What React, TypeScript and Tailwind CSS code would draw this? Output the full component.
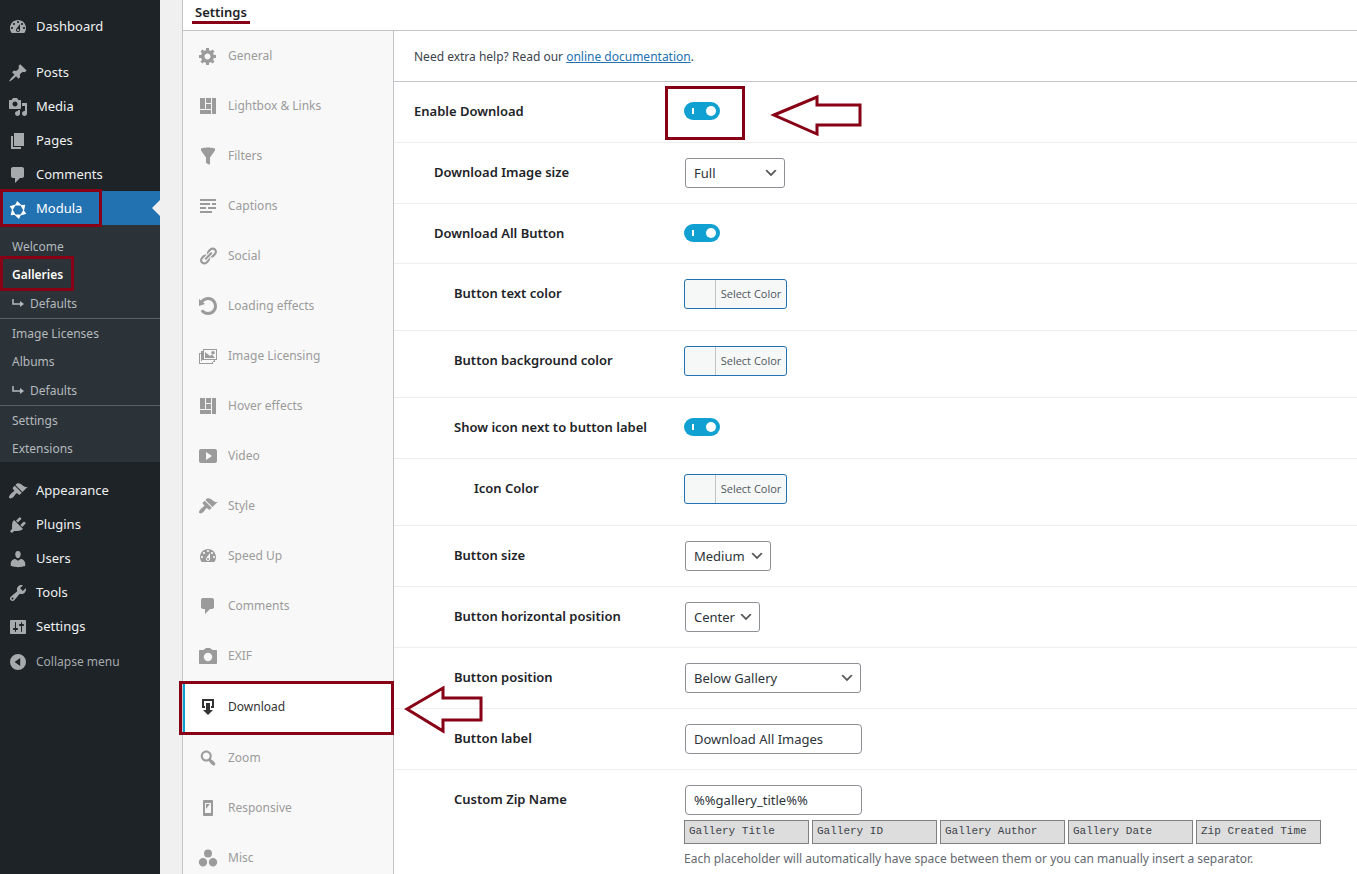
import type { ReactNode } from "react";
import { useState } from "react";
import clsx from "clsx";

// Icons, all on a 20x20 grid

const paths = {
  dashboard:
    "M3.76 16h12.48c1.1-1.37 1.76-3.11 1.76-5 0-4.42-3.58-8-8-8s-8 3.58-8 8c0 1.89.66 3.63 1.76 5zM10 4c.55 0 1 .45 1 1s-.45 1-1 1-1-.45-1-1 .45-1 1-1zM6 6c.55 0 1 .45 1 1s-.45 1-1 1-1-.45-1-1 .45-1 1-1zm8 0c.55 0 1 .45 1 1s-.45 1-1 1-1-.45-1-1 .45-1 1-1zm-5.37 5.55L12 7v6c0 1.1-.9 2-2 2s-2-.9-2-2c0-.57.24-1.08.63-1.45zM4 10c.55 0 1 .45 1 1s-.45 1-1 1-1-.45-1-1 .45-1 1-1zm12 0c.55 0 1 .45 1 1s-.45 1-1 1-1-.45-1-1 .45-1 1-1zm-5 3c0-.55-.45-1-1-1s-1 .45-1 1 .45 1 1 1 1-.45 1-1z",
  post: "M10.44 3.02l1.82-1.82 6.36 6.35-1.83 1.82c-1.05-.68-2.48-.57-3.41.36l-.75.75c-.92.93-1.04 2.35-.35 3.41l-1.83 1.82-2.41-2.41-2.8 2.79c-.42.42-3.38 2.71-3.8 2.29s1.86-3.39 2.28-3.81l2.79-2.79L4.1 9.36l1.83-1.82c1.05.69 2.48.57 3.4-.36l.75-.75c.93-.92 1.05-2.35.36-3.41z",
  media:
    "M13 11V4c0-.55-.45-1-1-1h-1.67L9 1H5L3.67 3H2c-.55 0-1 .45-1 1v7c0 .55.45 1 1 1h10c.55 0 1-.45 1-1zM7 4.5c1.38 0 2.5 1.12 2.5 2.5S8.38 9.5 7 9.5 4.5 8.38 4.5 7 5.62 4.5 7 4.5zM14 6h5v10.5c0 1.38-1.12 2.5-2.5 2.5S14 17.88 14 16.5s1.12-2.5 2.5-2.5c.17 0 .34.02.5.05V9h-3V6zm-4 8.05V13h2v3.5c0 1.38-1.12 2.5-2.5 2.5S7 17.88 7 16.5 8.12 14 9.5 14c.17 0 .34.02.5.05z",
  page: "M6 15V2h10v13H6zm-1 1h8v2H3V5h2v11z",
  comment:
    "M5 2h9c1.1 0 2 .9 2 2v7c0 1.1-.9 2-2 2h-2l-5 5v-5H5c-1.1 0-2-.9-2-2V4c0-1.1.9-2 2-2z",
  brush:
    "M14.48 11.06L7.41 3.99l1.5-1.5c.5-.56 2.3-.47 3.51.32 1.21.8 1.43 1.28 2.91 2.1 1.18.64 2.45 1.26 4.45.85zm-.71.71L6.7 4.7 4.93 6.47c-.39.39-.39 1.02 0 1.41l1.06 1.06c.39.39.39 1.03 0 1.42-.6.6-1.43 1.11-2.21 1.69-.35.26-.7.53-1.01.84C1.43 14.23.4 16.08 1.4 17.07c.99 1 2.84-.03 4.18-1.36.31-.31.58-.66.85-1.02.57-.78 1.08-1.61 1.69-2.21.39-.39 1.02-.39 1.41 0l1.06 1.06c.39.39 1.02.39 1.41 0z",
  plug: "M13.11 4.36L9.87 7.6 8 5.73l3.24-3.24c.35-.34 1.05-.2 1.56.32.52.51.66 1.21.31 1.55zm-8 1.77l.91-1.12 9.01 9.01-1.19.84c-.71.71-2.63 1.16-3.82 1.16H6.14L4.9 17.26c-.59.59-1.54.59-2.12 0-.59-.58-.59-1.53 0-2.12l1.24-1.24v-3.88c0-1.13.4-3.19 1.09-3.89zm7.26 3.97l3.24-3.24c.34-.35 1.04-.21 1.55.31.52.51.66 1.21.31 1.55l-3.24 3.25z",
  user: "M10 9.25c-2.27 0-2.73-3.44-2.73-3.44C7 4.02 7.82 2 9.97 2c2.16 0 2.98 2.02 2.71 3.81 0 0-.41 3.44-2.68 3.44zm0 2.57L12.72 10c2.39 0 4.52 2.33 4.52 4.53v2.49s-3.65 1.13-7.24 1.13c-3.65 0-7.24-1.13-7.24-1.13v-2.49c0-2.25 1.94-4.48 4.47-4.48z",
  wrench:
    "M16.68 9.77c-1.34 1.34-3.3 1.67-4.95.99l-5.41 6.52c-.99.99-2.59.99-3.58 0s-.99-2.59 0-3.57l6.52-5.42c-.68-1.65-.35-3.61.99-4.95 1.28-1.28 3.12-1.62 4.72-1.06l-2.89 2.89 2.82 2.82 2.86-2.87c.53 1.58.18 3.39-1.08 4.65zM3.81 16.21c.4.39 1.04.39 1.43 0 .4-.4.4-1.04 0-1.43-.39-.4-1.03-.4-1.43 0-.39.39-.39 1.03 0 1.43z",
  sliders:
    "M18 16V4c0-.55-.45-1-1-1H3c-.55 0-1 .45-1 1v12c0 .55.45 1 1 1h14c.55 0 1-.45 1-1zM8 11h1c.55 0 1 .45 1 1s-.45 1-1 1H8v1.5c0 .28-.22.5-.5.5s-.5-.22-.5-.5V13H6c-.55 0-1-.45-1-1s.45-1 1-1h1V5.5c0-.28.22-.5.5-.5s.5.22.5.5V11zm5-2h-1c-.55 0-1-.45-1-1s.45-1 1-1h1V5.5c0-.28.22-.5.5-.5s.5.22.5.5V7h1c.55 0 1 .45 1 1s-.45 1-1 1h-1v5.5c0 .28-.22.5-.5.5s-.5-.22-.5-.5V9z",
  collapse: "M10 2a8 8 0 1 0 0 16 8 8 0 0 0 0-16zM12.2 6v8L6.6 10z",
  gear: "M18 12h-2.18c-.17.7-.44 1.35-.81 1.93l1.54 1.54-2.1 2.1-1.54-1.54c-.58.36-1.23.63-1.91.79V19H8v-2.18c-.68-.16-1.33-.43-1.91-.79l-1.54 1.54-2.12-2.12 1.54-1.54c-.36-.58-.63-1.23-.79-1.91H1V9.03h2.17c.16-.7.44-1.35.8-1.94L2.43 5.55l2.1-2.1 1.54 1.54c.58-.37 1.24-.64 1.93-.81V2h3v2.18c.68.16 1.33.43 1.91.79l1.54-1.54 2.12 2.12-1.54 1.54c.36.59.64 1.24.8 1.94H18V12zm-8.5 1.5c1.66 0 3-1.34 3-3s-1.34-3-3-3-3 1.34-3 3 1.34 3 3 3z",
  layout: "M2 2h5v11H2V2zm6 0h5v5H8V2zm6 0h4v16h-4V2zM8 8h5v5H8V8zm-6 6h11v4H2v-4z",
  filter:
    "M3 4.5v-2s3.34-1 7-1 7 1 7 1v2l-5 7.03v6.97s-1.22-.09-2.25-.59S8 16.5 8 16.5v-4.97z",
  text: "M18 3v2H2V3h16zm-6 4v2H2V7h10zm6 0v2h-4V7h4zM8 11v2H2v-2h6zm10 0v2h-8v-2h8zm-4 4v2H2v-2h12z",
  link: "M17.74 2.76c1.68 1.69 1.68 4.41 0 6.1l-1.53 1.52c-1.12 1.12-2.7 1.47-4.14 1.09l2.62-2.61.76-.77.76-.76c.84-.84.84-2.2 0-3.04-.84-.85-2.2-.85-3.04 0l-.77.76-3.38 3.38c-.37-1.44-.02-3.02 1.1-4.14l1.52-1.53c1.69-1.68 4.42-1.68 6.1 0zM8.59 13.43l5.34-5.34c.42-.42.42-1.1 0-1.52-.44-.43-1.13-.39-1.53 0l-5.33 5.34c-.42.42-.42 1.1 0 1.52.44.43 1.13.39 1.52 0zm-.76 2.29l4.14-4.15c.38 1.44.03 3.02-1.09 4.14l-1.52 1.53c-1.69 1.68-4.41 1.68-6.1 0-1.68-1.68-1.68-4.42 0-6.1l1.53-1.52c1.12-1.12 2.7-1.47 4.14-1.1l-4.14 4.15c-.85.84-.85 2.2 0 3.05.84.84 2.2.84 3.04 0z",
  rotate:
    "M10.25 1.02c5.1 0 8.75 4.04 8.75 9s-3.65 9-8.75 9c-3.2 0-6.02-1.59-7.68-3.99l2.59-1.52c1.1 1.5 2.86 2.51 4.84 2.51 3.3 0 6-2.79 6-6s-2.7-6-6-6c-1.97 0-3.72 1-4.82 2.49L7 8.02l-6 2v-7L2.89 4.6c1.69-2.17 4.36-3.58 7.36-3.58z",
  images:
    "M5 3h14v11h-2v2h-2v2H1V7h2V5h2V3zM6 4v9h12V4H6zM4 6v8h12v1H3V8H2v9h12v-1h1v-1H4V6zM7 6l5 4 2-1.5L17 12H7zM15 5a1.8 1.8 0 1 1 0 3.6 1.8 1.8 0 0 1 0-3.6z",
  video:
    "M19 15V5c0-1.1-.9-2-2-2H3c-1.1 0-2 .9-2 2v10c0 1.1.9 2 2 2h14c1.1 0 2-.9 2-2zM8 14V6l6 4z",
  camera:
    "M1 5c0-.6.4-1 1-1h3.5L8 2h4l2.5 2H18c.6 0 1 .4 1 1v12c0 .6-.4 1-1 1H2c-.6 0-1-.4-1-1zM10 6.8a4.2 4.2 0 1 0 0 8.4 4.2 4.2 0 0 0 0-8.4z",
  download: "M4 2h12v9h-3V9h1V4H6v5h1v2H4zM8 6h4v7h3l-5 5-5-5h3z",
  search:
    "M12.14 4.18c1.87 1.87 2.11 4.75.72 6.89.12.1.22.21.36.31.2.16.47.36.81.59.34.24.56.39.66.47.42.31.73.57.94.78.32.32.6.65.84 1 .25.35.44.69.59 1.04.14.35.21.68.18 1-.02.32-.14.59-.36.81s-.49.34-.81.36c-.31.02-.65-.04-.99-.19-.35-.14-.7-.34-1.04-.59-.35-.24-.68-.52-1-.84-.21-.21-.47-.52-.77-.93-.1-.13-.25-.35-.47-.66-.22-.32-.4-.57-.56-.78-.16-.2-.29-.35-.44-.5-2.07 1.09-4.69.76-6.44-.98-2.14-2.15-2.14-5.64 0-7.78 2.15-2.15 5.63-2.15 7.78 0zm-1.41 6.36c1.36-1.37 1.36-3.58 0-4.95-1.37-1.37-3.59-1.37-4.95 0-1.37 1.37-1.37 3.58 0 4.95 1.36 1.37 3.58 1.37 4.95 0z",
  tablet:
    "M6 2h8c.55 0 1 .45 1 1v14c0 .55-.45 1-1 1H6c-.55 0-1-.45-1-1V3c0-.55.45-1 1-1zM7 5v10h6V5zM8 6h4l-4 5z",
  groups:
    "M10 1.5a4 4 0 1 1 0 8 4 4 0 0 1 0-8zM5 10a4.2 4.2 0 1 1 0 8.4A4.2 4.2 0 0 1 5 10zM15 10a4.2 4.2 0 1 1 0 8.4 4.2 4.2 0 0 1 0-8.4z",
};

type IconName = keyof typeof paths;

function Icon({ name }: { name: IconName }) {
  return (
    <svg viewBox="0 0 20 20" className="size-5 shrink-0" fill="currentColor" aria-hidden="true">
      <path d={paths[name]} fillRule="evenodd" />
    </svg>
  );
}

function ModulaIcon() {
  return (
    <svg viewBox="0 0 20 20" className="size-5 shrink-0" fill="currentColor" aria-hidden="true">
      {[0, 60, 120, 180, 240, 300].map((angle) => (
        <path key={angle} d="M9 2l5 4.5H7z" transform={`rotate(${angle} 10 11)`} />
      ))}
    </svg>
  );
}

function SubArrow() {
  return (
    <svg viewBox="0 0 12 10" className="h-2.5 w-3" aria-hidden="true">
      <path d="M1 0v5h8" fill="none" stroke="currentColor" strokeWidth="1.5" />
      <path d="M8 2l4 3-4 3z" fill="currentColor" />
    </svg>
  );
}

// Hand-drawn style markers
function RedBox({ className }: { className: string }) {
  return (
    <span className={clsx("pointer-events-none absolute border-3 border-[#880015]", className)} />
  );
}

function RedArrow({ className, points }: { className: string; points: string }) {
  return (
    <svg className={clsx("pointer-events-none absolute", className)} aria-hidden="true">
      <polygon points={points} fill="none" stroke="#880015" strokeWidth="3" />
    </svg>
  );
}

// Admin menu

function MenuItem({ icon, children }: { icon: IconName; children: ReactNode }) {
  return (
    <li>
      <a href="#" className="flex h-[34px] items-center gap-2 px-2 pt-0.5 text-[#f0f0f1]">
        <span className="text-[#a7aaad]">
          <Icon name={icon} />
        </span>
        {children}
      </a>
    </li>
  );
}

function SubItem({ children }: { children: ReactNode }) {
  return (
    <li>
      <a href="#" className="flex h-7 items-center px-3 pt-0.5">
        {children}
      </a>
    </li>
  );
}

function SubDefaults() {
  return (
    <li className="border-b border-[#5d6165]">
      <a href="#" className="flex h-[30px] items-center gap-1.5 px-3 pt-0.5">
        <SubArrow />
        Defaults
      </a>
    </li>
  );
}

function AdminMenu() {
  return (
    <nav className="w-40 shrink-0 bg-[#1d2327] pt-[9px] text-[13px]" aria-label="Main menu">
      <ul>
        <MenuItem icon="dashboard">Dashboard</MenuItem>
      </ul>
      <ul className="mt-3">
        <MenuItem icon="post">Posts</MenuItem>
        <MenuItem icon="media">Media</MenuItem>
        <MenuItem icon="page">Pages</MenuItem>
        <MenuItem icon="comment">Comments</MenuItem>
        <li>
          <a
            href="#"
            className="relative flex h-[34px] items-center gap-2 bg-[#2271b1] px-2 pt-0.5 text-white"
          >
            <ModulaIcon />
            Modula
            <span className="absolute top-[9px] right-0 border-8 border-l-0 border-transparent border-r-[#f0f0f1]" />
            <RedBox className="-top-0.5 left-0 h-[38px] w-[102px]" />
          </a>
          <ul className="bg-[#2c3338] pt-[7px] text-xs text-[#b4b9be]">
            <SubItem>Welcome</SubItem>
            <li className="relative">
              <a href="#" className="flex h-7 items-center px-3 pt-0.5 font-semibold text-white">
                Galleries
              </a>
              <RedBox className="-top-1 left-0 h-[35px] w-[74px]" />
            </li>
            <SubDefaults />
            <SubItem>Image Licenses</SubItem>
            <SubItem>Albums</SubItem>
            <SubDefaults />
            <SubItem>Settings</SubItem>
            <SubItem>Extensions</SubItem>
          </ul>
        </li>
      </ul>
      <ul className="mt-[11px]">
        <MenuItem icon="brush">Appearance</MenuItem>
        <MenuItem icon="plug">Plugins</MenuItem>
        <MenuItem icon="user">Users</MenuItem>
        <MenuItem icon="wrench">Tools</MenuItem>
        <MenuItem icon="sliders">Settings</MenuItem>
      </ul>
      <button
        type="button"
        className="flex h-9 items-center gap-2 px-2 pt-0.5 text-xs text-[#a7aaad]"
      >
        <Icon name="collapse" />
        Collapse menu
      </button>
    </nav>
  );
}

// Gallery settings

const tabs: { icon: IconName; name: string }[] = [
  { icon: "gear", name: "General" },
  { icon: "layout", name: "Lightbox & Links" },
  { icon: "filter", name: "Filters" },
  { icon: "text", name: "Captions" },
  { icon: "link", name: "Social" },
  { icon: "rotate", name: "Loading effects" },
  { icon: "images", name: "Image Licensing" },
  { icon: "layout", name: "Hover effects" },
  { icon: "video", name: "Video" },
  { icon: "brush", name: "Style" },
  { icon: "dashboard", name: "Speed Up" },
  { icon: "comment", name: "Comments" },
  { icon: "camera", name: "EXIF" },
  { icon: "download", name: "Download" },
  { icon: "search", name: "Zoom" },
  { icon: "tablet", name: "Responsive" },
  { icon: "groups", name: "Misc" },
];

function SettingsTabs() {
  return (
    <nav
      className="w-[211px] shrink-0 border-r border-[#c3c4c7] bg-[#f8f8f8] text-xs text-[#9b9b9b]"
      aria-label="Gallery settings"
    >
      {tabs.map((tab) => {
        const active = tab.name === "Download";
        return (
          <a
            key={tab.name}
            href="#"
            className={clsx(
              "relative flex items-center gap-2.5",
              active
                ? "h-[52px] border-l-2 border-[#0f9fd6] bg-white pl-[13px] text-[#333]"
                : "h-[50px] pl-[15px]"
            )}
          >
            <Icon name={tab.icon} />
            {tab.name}
            {active && (
              <>
                <RedBox className="top-0 -left-1.5 h-[54px] w-[215px]" />
                <RedArrow
                  className="top-0 left-[219px] h-14 w-20"
                  points="3,28 39,7 39,17 77,17 77,39 39,39 39,50"
                />
              </>
            )}
          </a>
        );
      })}
    </nav>
  );
}

function Row({
  id,
  label,
  indent = "pl-5",
  size = "pb-[15px]",
  children,
}: {
  id: string;
  label: string;
  indent?: string;
  size?: string;
  children: ReactNode;
}) {
  return (
    <div className={clsx("flex border-b border-[#eee] pt-[15px]", size)}>
      <div className={clsx("w-[290px] shrink-0", indent)}>
        <label htmlFor={id} className="text-[13px] leading-7 font-semibold text-[#1d2327]">
          {label}
        </label>
      </div>
      <div className="min-h-[30px]">{children}</div>
    </div>
  );
}

function Toggle({ id }: { id: string }) {
  const [on, setOn] = useState(true);
  return (
    <div className="flex h-7 items-center">
      <span className="relative flex h-[18px] w-9">
        <input
          id={id}
          type="checkbox"
          checked={on}
          onChange={(e) => setOn(e.target.checked)}
          className="h-[18px] w-9 appearance-none rounded-full bg-[#a0a5aa] checked:bg-[#11a0d2]"
        />
        <span className="pointer-events-none absolute top-1.5 left-2 h-1.5 w-0.5 bg-white" />
        <span
          className={clsx(
            "pointer-events-none absolute top-1 size-2.5 rounded-full bg-white",
            on ? "right-1" : "left-1"
          )}
        />
      </span>
    </div>
  );
}

function Select({ id, width, options }: { id: string; width: string; options: string[] }) {
  return (
    <div className={clsx("relative ml-px", width)}>
      <select
        id={id}
        className="h-[30px] w-full appearance-none rounded-[3px] border border-[#8c8f94] bg-white pt-px pl-2 text-[13px] text-[#2c3338]"
      >
        {options.map((option) => (
          <option key={option}>{option}</option>
        ))}
      </select>
      <svg
        viewBox="0 0 20 20"
        className="pointer-events-none absolute top-[7px] right-1.5 size-4"
        fill="#555"
        aria-hidden="true"
      >
        <path d="M5 6l5 5 5-5 2 1-7 7-7-7 2-1z" />
      </svg>
    </div>
  );
}

function TextInput({ id, value }: { id: string; value: string }) {
  return (
    <input
      id={id}
      type="text"
      defaultValue={value}
      className="ml-px block h-[30px] w-[177px] rounded border border-[#8c8f94] bg-white px-2 text-[13px] text-[#2c3338]"
    />
  );
}

function ColorButton({ id }: { id: string }) {
  return (
    <button
      id={id}
      type="button"
      className="flex h-[30px] w-[103px] rounded-[3px] border border-[#2271b1] bg-[#f6f7f7] font-['Open_Sans',sans-serif] text-[11px] leading-7 text-[#50575e]"
    >
      <span className="ml-[30px] flex-1 border-l border-[#c3c4c7] text-center">Select Color</span>
    </button>
  );
}

const placeholders = [
  "Gallery Title",
  "Gallery ID",
  "Gallery Author",
  "Gallery Date",
  "Zip Created Time",
];

function DownloadSettings() {
  return (
    <div className="min-w-0 flex-1 bg-white">
      <p className="border-b border-[#c3c4c7] px-5 pt-0.5 text-xs leading-[48px] text-[#3c434a]">
        Need extra help? Read our{" "}
        <a href="#" className="text-[#2271b1] underline">
          online documentation
        </a>
        .
      </p>
      <Row id="enable" label="Enable Download">
        <div className="relative">
          <Toggle id="enable" />
          <RedBox className="-top-[11px] -left-[19px] h-[54px] w-20" />
          <RedArrow
            className="-top-1 left-[86px] h-12 w-24"
            points="4,22 47,4 47,12 90,12 90,32 47,32 47,41"
          />
        </div>
      </Row>
      <Row id="size" label="Download Image size" indent="pl-10">
        <Select id="size" width="w-[100px]" options={["Full", "Large", "Medium", "Thumbnail"]} />
      </Row>
      <Row id="all" label="Download All Button" indent="pl-10" size="pb-3.5">
        <Toggle id="all" />
      </Row>
      <Row id="text-color" label="Button text color" indent="pl-15" size="pb-[21px]">
        <ColorButton id="text-color" />
      </Row>
      <Row id="bg-color" label="Button background color" indent="pl-15" size="pb-[21px]">
        <ColorButton id="bg-color" />
      </Row>
      <Row id="show-icon" label="Show icon next to button label" indent="pl-15">
        <Toggle id="show-icon" />
      </Row>
      <Row id="icon-color" label="Icon Color" indent="pl-20" size="pb-[21px]">
        <ColorButton id="icon-color" />
      </Row>
      <Row id="button-size" label="Button size" indent="pl-15">
        <Select id="button-size" width="w-[86px]" options={["Medium", "Small", "Large"]} />
      </Row>
      <Row id="horizontal" label="Button horizontal position" indent="pl-15">
        <Select id="horizontal" width="w-[75px]" options={["Center", "Left", "Right"]} />
      </Row>
      <Row id="position" label="Button position" indent="pl-15">
        <Select id="position" width="w-[176px]" options={["Below Gallery", "Above Gallery"]} />
      </Row>
      <Row id="label" label="Button label" indent="pl-15">
        <TextInput id="label" value="Download All Images" />
      </Row>
      <Row id="zip" label="Custom Zip Name" indent="pl-15">
        <TextInput id="zip" value="%%gallery_title%%" />
        <div className="mt-[5px] flex gap-[3px]">
          {placeholders.map((name) => (
            <button
              key={name}
              type="button"
              className="h-6 w-[125px] border border-[#808080] bg-[#ddd] px-1 pb-0.5 text-left font-['Liberation_Mono',monospace] text-[11px] text-[#3c434a]"
            >
              {name}
            </button>
          ))}
        </div>
        <p className="mt-[5px] text-xs leading-5 text-[#646970]">
          Each placeholder will automatically have space between them or you can manually insert a
          separator.
        </p>
      </Row>
    </div>
  );
}

export default function App() {
  return (
    <div className="flex h-screen overflow-hidden bg-[#f0f0f1] font-['Noto_Sans','Open_Sans',sans-serif]">
      <AdminMenu />
      <main className="ml-[22px] flex min-w-0 flex-1 flex-col border-l border-[#c3c4c7]">
        <header className="flex h-[31px] shrink-0 items-start border-b border-[#c3c4c7] bg-white pl-[9px]">
          <h2 className="border-b-3 border-[#880015] px-[3px] pt-[3px] text-[13px] leading-[18px] font-semibold text-[#1d2327]">
            Settings
          </h2>
        </header>
        <div className="flex flex-1">
          <SettingsTabs />
          <DownloadSettings />
        </div>
      </main>
    </div>
  );
}
